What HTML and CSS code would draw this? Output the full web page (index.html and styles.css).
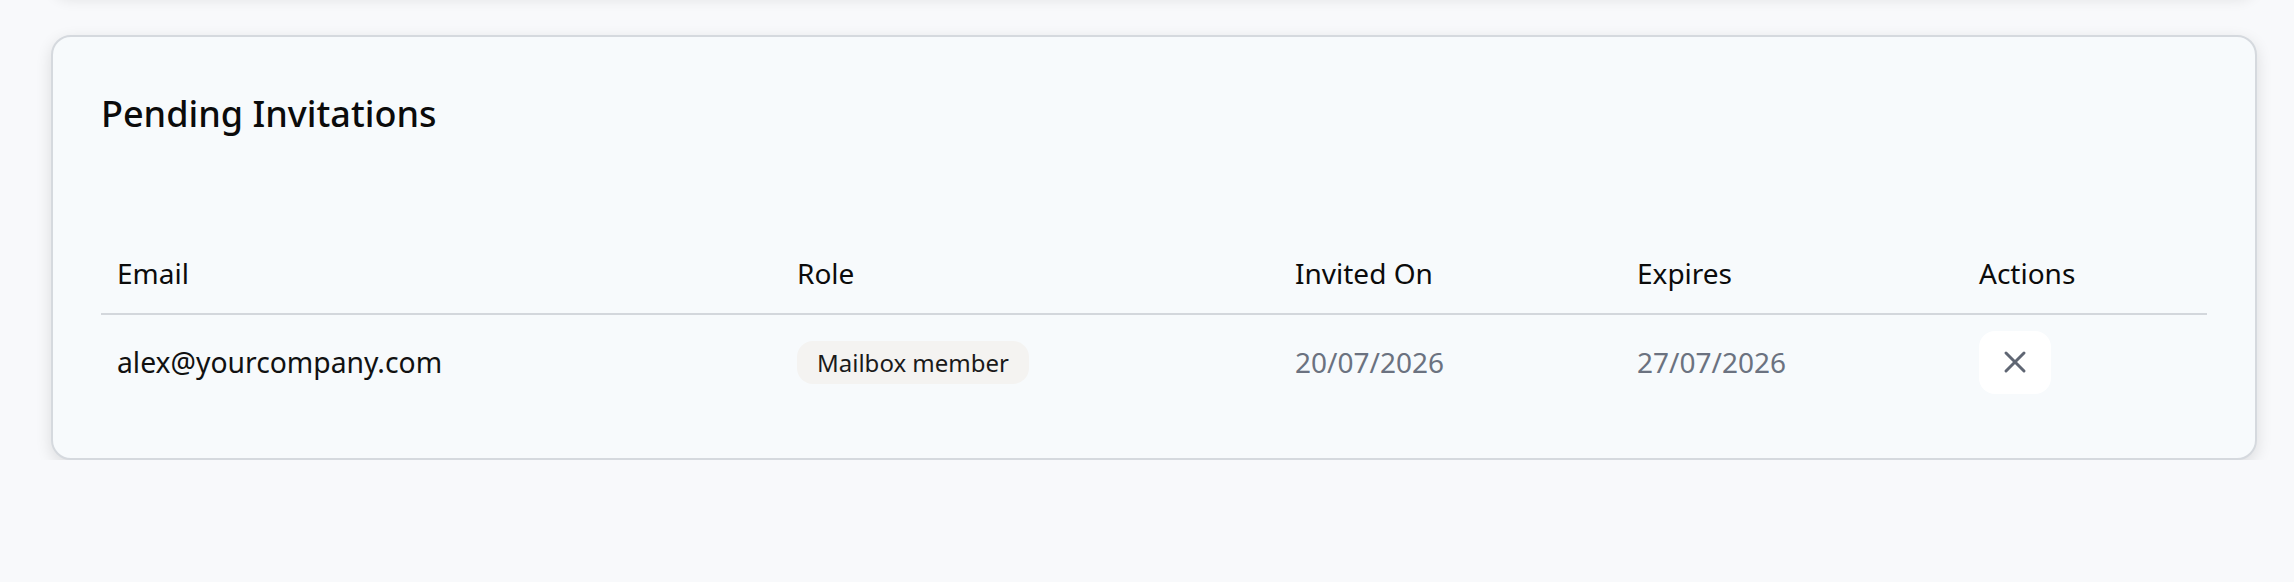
FILE: index.html
```html
<!DOCTYPE html>
<html lang="en">
<head>
<meta charset="UTF-8" />
<meta name="viewport" content="width=device-width, initial-scale=1" />
<title>Pending Invitations</title>
<link rel="stylesheet" href="styles.css">
</head>
<body>

<div class="prev-card"></div>

<section class="card" aria-label="Pending Invitations">
  <h2>Pending Invitations</h2>
  <table>
    <thead>
      <tr>
        <th class="col-email">Email</th>
        <th class="col-role">Role</th>
        <th class="col-date">Invited On</th>
        <th class="col-date">Expires</th>
        <th class="col-actions">Actions</th>
      </tr>
    </thead>
    <tbody>
      <tr>
        <td>alex@yourcompany.com</td>
        <td><span class="badge">Mailbox member</span></td>
        <td class="muted">20/07/2026</td>
        <td class="muted">27/07/2026</td>
        <td>
          <button class="icon-btn" aria-label="Revoke invitation for alex@yourcompany.com">
            <svg width="36" height="36" viewBox="0 0 36 36" fill="none" stroke="currentColor" stroke-width="3" stroke-linecap="round">
              <path d="M27 9 9 27" />
              <path d="M9 9 27 27" />
            </svg>
          </button>
        </td>
      </tr>
    </tbody>
  </table>
</section>

</body>
</html>
```

FILE: styles.css
```css
body { font-family: "Noto Sans", "Open Sans", sans-serif; margin: 0; padding: 0 37px 0 51px; background: #f8f9fb; color: #111; overflow: hidden; }
.prev-card { height: 40px; margin-top: -44px; background: #f7fafc; border-radius: 20px; box-shadow: 0 4px 14px rgba(0,0,0,0.09); }
.card { margin-top: 39px; background: #f7fafc; border: 2px solid #d5d9de; border-radius: 20px; padding: 48px; box-shadow: 0 5px 16px rgba(0,0,0,0.12); }
h2 { margin: 0 0 96px; font-size: 36px; font-weight: 500; line-height: 1.6; color: #0b0b0b; }
table { width: 100%; border-collapse: collapse; table-layout: fixed; }
th, td { padding: 16px; text-align: left; font-size: 28px; line-height: 1.5; vertical-align: middle; }
th { padding: 13px 16px 19px; font-weight: 400; color: #0b0b0b; border-bottom: 2px solid #d3d7dc; }
td { color: #111; font-size: 28.3px; }
.col-email { width: 648px; }
.col-role { width: 466px; }
.col-date { width: 310px; }
.muted { color: #6b7280; font-size: 28px; }
.badge { display: inline-block; padding: 4px 20px; font-size: 24px; line-height: 35px; background: #f4f3f1; border-radius: 16px; color: #1a1a1a; }
.icon-btn { display: flex; align-items: center; justify-content: center; width: 72px; height: 63px; padding: 0; border: none; border-radius: 16px; background: #fff; color: #5f6673; cursor: pointer; }
.icon-btn:hover { background: #f1f3f5; }
```
